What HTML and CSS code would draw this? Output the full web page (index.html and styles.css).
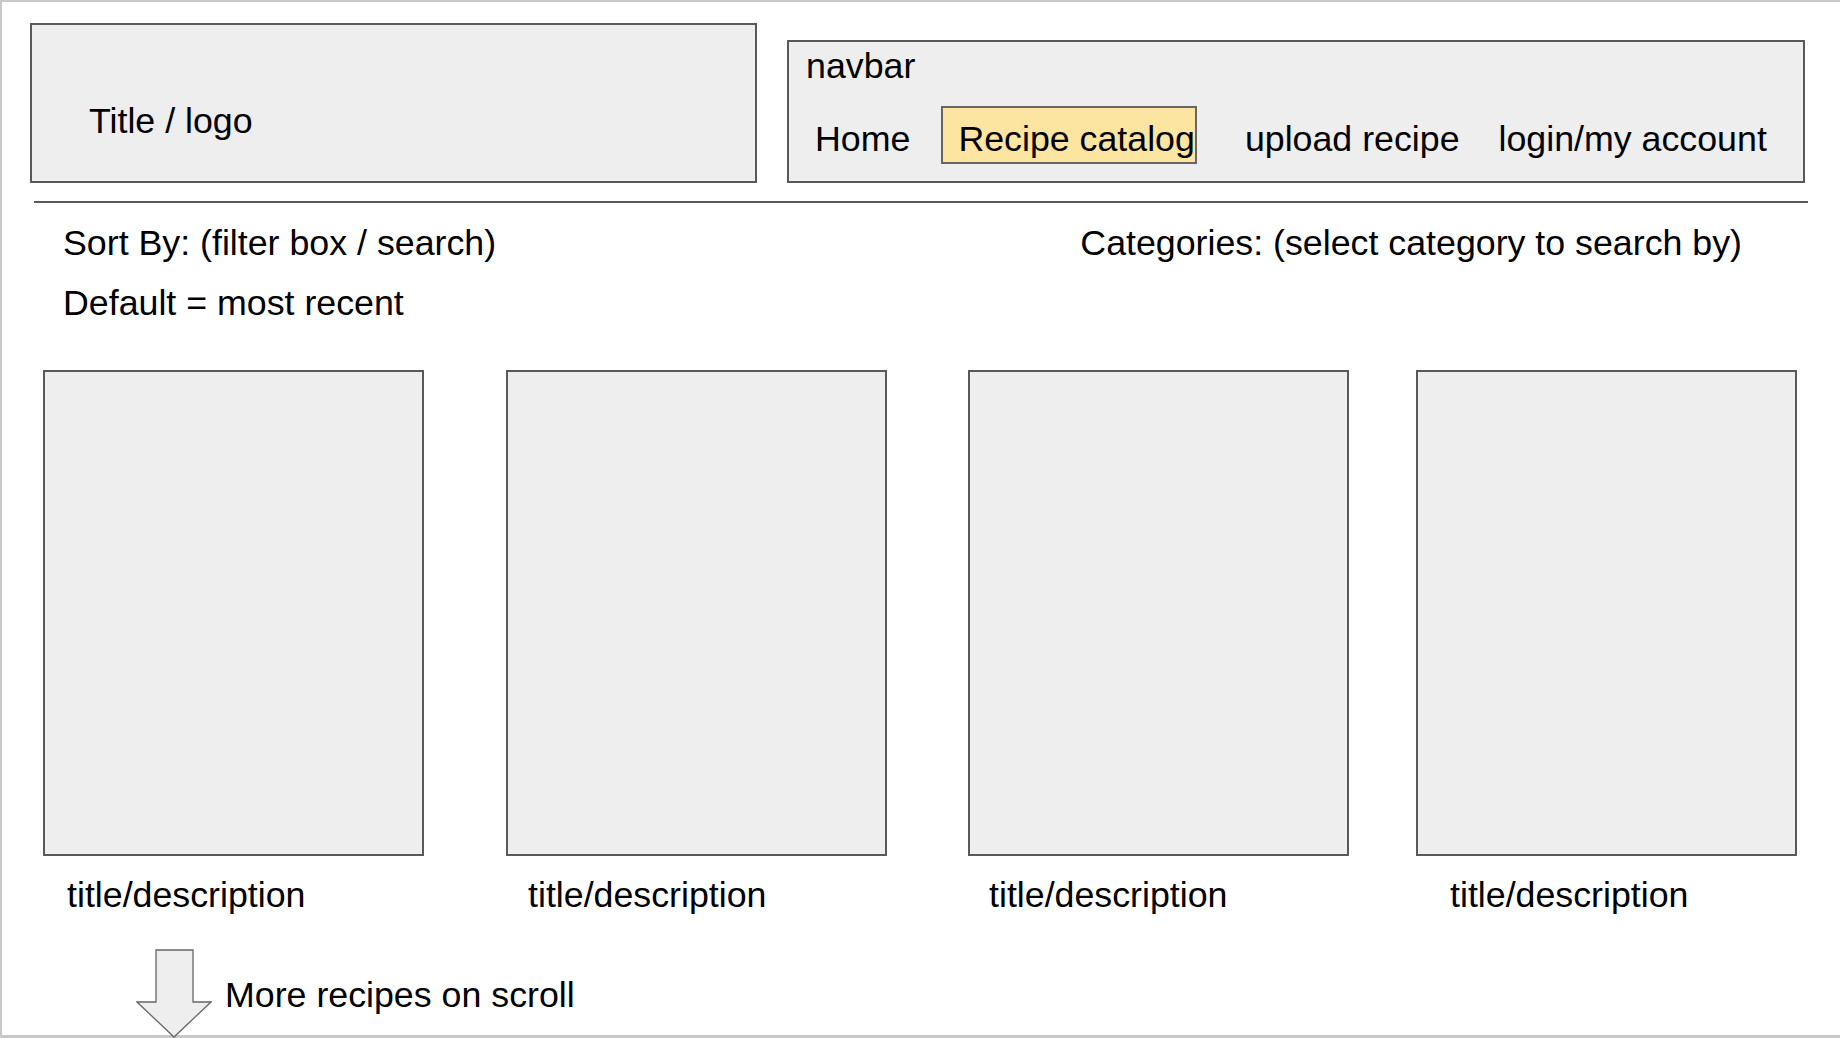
FILE: index.html
```html
<!DOCTYPE html>
<html lang="en">
<head>
  <meta charset="UTF-8">
  <meta name="viewport" content="width=device-width, initial-scale=1.0">
  <title>Recipe catalog - wireframe</title>
  <link rel="stylesheet" href="styles.css">
</head>
<body>
  <div class="canvas">
    <header class="top">
      <div class="brand">Title / logo</div>
      <nav class="navbar">
        <div class="navbarLabel">navbar</div>
        <ul class="navLinks">
          <li class="navLink home">Home</li>
          <li class="navLink catalog is-active">Recipe catalog</li>
          <li class="navLink upload">upload recipe</li>
          <li class="navLink login">login/my account</li>
        </ul>
      </nav>
    </header>
    <hr class="divider">
    <section class="filters">
      <div class="sort">
        <p>Sort By: (filter box / search)</p>
        <p class="sortDefault">Default = most recent</p>
      </div>
      <p class="categories">Categories: (select category to search by)</p>
    </section>
    <section class="recipes">
      <div class="recipe">
        <div class="recipeImage"></div>
        <p class="recipeTitle">title/description</p>
      </div>
      <div class="recipe">
        <div class="recipeImage"></div>
        <p class="recipeTitle">title/description</p>
      </div>
      <div class="recipe">
        <div class="recipeImage"></div>
        <p class="recipeTitle">title/description</p>
      </div>
      <div class="recipe">
        <div class="recipeImage"></div>
        <p class="recipeTitle">title/description</p>
      </div>
    </section>
    <div class="more">
      <svg class="moreArrow" width="76" height="89" viewBox="0 0 76 89">
        <polygon points="20,1 57,1 57,53 75,53 38,88 1,53 20,53" fill="#eeeeee" stroke="#666666" stroke-width="1.3"/>
      </svg>
      <span>More recipes on scroll</span>
    </div>
  </div>
</body>
</html>
```

FILE: styles.css
```css
* {
  margin: 0;
  padding: 0;
  box-sizing: border-box;
}
html, body {
  height: 100%;
  overflow: hidden;
}
body {
  font-family: "Liberation Sans", Arial, sans-serif;
  font-size: 35.75px;
  line-height: 40px;
  color: #000;
  background-color: #fff;
}
.canvas {
  height: 1038px;
  border-top: 2px solid #c8c8c8;
  border-left: 2px solid #c8c8c8;
  border-bottom: 3px solid #c8c8c8;
}
.top {
  display: flex;
  align-items: flex-end;
  gap: 30px;
  padding: 21px 0 0 28px;
}
.brand {
  width: 727px;
  height: 160px;
  padding: 76px 0 0 57px;
  border: 2px solid #595959;
  background-color: #eeeeee;
}
.navbar {
  width: 1018px;
  height: 143px;
  padding: 4px 0 0 17px;
  border: 2px solid #595959;
  background-color: #eeeeee;
}
.navLinks {
  display: flex;
  align-items: baseline;
  margin-top: 20px;
  list-style: none;
}
.navLink {
  white-space: nowrap;
}
.home {
  margin-left: 9px;
}
.catalog {
  margin-left: 31px;
  padding: 11px 0 3px 15px;
  border: 2px solid #666666;
  background-color: #fce5a1;
}
.upload {
  margin-left: 48px;
}
.login {
  margin-left: 39px;
}
.divider {
  width: 1774px;
  height: 2px;
  margin: 18px 0 0 32px;
  border: 0;
  background-color: #595959;
}
.filters {
  display: flex;
  margin-top: 20px;
  padding: 0 98px 0 61px;
}
.sortDefault {
  margin-top: 20px;
}
.categories {
  margin-left: auto;
}
.recipes {
  display: grid;
  grid-template-columns: repeat(4, 381px);
  column-gap: 80px;
  margin-top: 47px;
  padding-left: 41px;
}
.recipeImage {
  width: 100%;
  height: 486px;
  border: 2px solid #595959;
  background-color: #eeeeee;
}
.recipe:nth-child(2) .recipeImage {
  margin-left: 2px;
}
.recipe:nth-child(3) .recipeImage {
  margin-left: 3px;
}
.recipe:nth-child(4) .recipeImage {
  margin-left: -10px;
}
.recipeTitle {
  margin-top: 19px;
  padding-left: 24px;
}
.more {
  display: flex;
  align-items: center;
  gap: 13px;
  margin-top: 34px;
  padding-left: 134px;
}
.moreArrow {
  display: block;
  flex-shrink: 0;
}
.more span {
  padding-top: 2px;
}
```
